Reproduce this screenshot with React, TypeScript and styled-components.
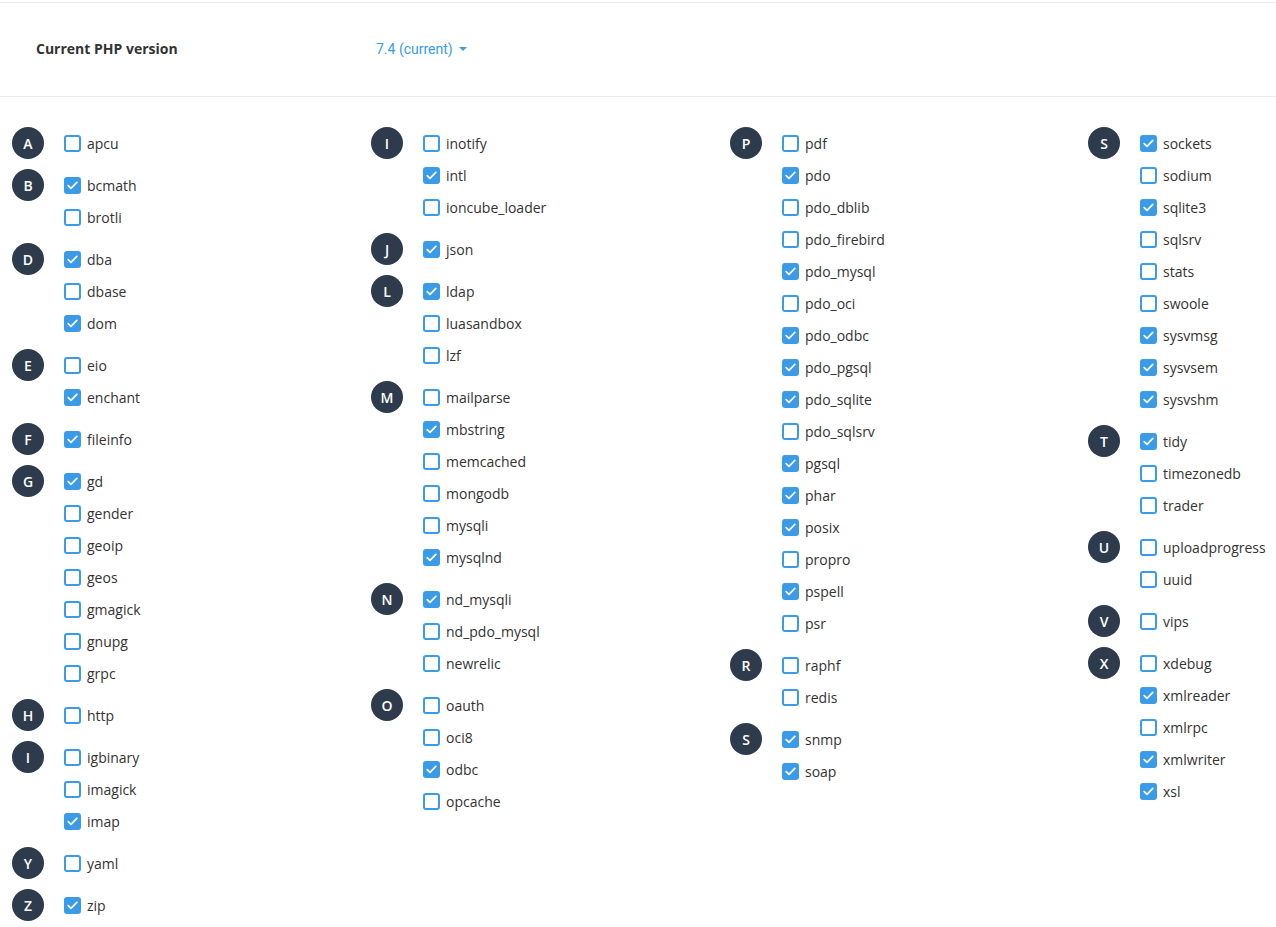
import * as React from 'react';
import styled, { createGlobalStyle } from 'styled-components';

const GlobalStyle = createGlobalStyle`
  html, body {
    margin: 0;
    padding: 0;
    background: #ffffff;
    overflow-x: hidden;
  }
  body {
    font-family: "Open Sans", "Liberation Sans", sans-serif;
    font-size: 14px;
    color: #333333;
  }
`;

interface Ext {
  name: string;
  on?: boolean;
}

interface Group {
  letter: string;
  items: Ext[];
}

const e = (name: string, on = false): Ext => ({ name, on });

const columns: Group[][] = [
  [
    { letter: 'A', items: [e('apcu')] },
    { letter: 'B', items: [e('bcmath', true), e('brotli')] },
    { letter: 'D', items: [e('dba', true), e('dbase'), e('dom', true)] },
    { letter: 'E', items: [e('eio'), e('enchant', true)] },
    { letter: 'F', items: [e('fileinfo', true)] },
    {
      letter: 'G',
      items: [e('gd', true), e('gender'), e('geoip'), e('geos'), e('gmagick'), e('gnupg'), e('grpc')],
    },
    { letter: 'H', items: [e('http')] },
    { letter: 'I', items: [e('igbinary'), e('imagick'), e('imap', true)] },
    { letter: 'Y', items: [e('yaml')] },
    { letter: 'Z', items: [e('zip', true)] },
  ],
  [
    { letter: 'I', items: [e('inotify'), e('intl', true), e('ioncube_loader')] },
    { letter: 'J', items: [e('json', true)] },
    { letter: 'L', items: [e('ldap', true), e('luasandbox'), e('lzf')] },
    {
      letter: 'M',
      items: [e('mailparse'), e('mbstring', true), e('memcached'), e('mongodb'), e('mysqli'), e('mysqlnd', true)],
    },
    { letter: 'N', items: [e('nd_mysqli', true), e('nd_pdo_mysql'), e('newrelic')] },
    { letter: 'O', items: [e('oauth'), e('oci8'), e('odbc', true), e('opcache')] },
  ],
  [
    {
      letter: 'P',
      items: [
        e('pdf'),
        e('pdo', true),
        e('pdo_dblib'),
        e('pdo_firebird'),
        e('pdo_mysql', true),
        e('pdo_oci'),
        e('pdo_odbc', true),
        e('pdo_pgsql', true),
        e('pdo_sqlite', true),
        e('pdo_sqlsrv'),
        e('pgsql', true),
        e('phar', true),
        e('posix', true),
        e('propro'),
        e('pspell', true),
        e('psr'),
      ],
    },
    { letter: 'R', items: [e('raphf'), e('redis')] },
    { letter: 'S', items: [e('snmp', true), e('soap', true)] },
  ],
  [
    {
      letter: 'S',
      items: [
        e('sockets', true),
        e('sodium'),
        e('sqlite3', true),
        e('sqlsrv'),
        e('stats'),
        e('swoole'),
        e('sysvmsg', true),
        e('sysvsem', true),
        e('sysvshm', true),
      ],
    },
    { letter: 'T', items: [e('tidy', true), e('timezonedb'), e('trader')] },
    { letter: 'U', items: [e('uploadprogress'), e('uuid')] },
    { letter: 'V', items: [e('vips')] },
    {
      letter: 'X',
      items: [e('xdebug'), e('xmlreader', true), e('xmlrpc'), e('xmlwriter', true), e('xsl', true)],
    },
  ],
];

const Page = styled.div`
  padding-top: 2px;
`;

const VersionBar = styled.div`
  display: flex;
  align-items: center;
  height: 95px;
  box-sizing: border-box;
  padding: 0 0 2px 36px;
  border-top: 1px solid #ebebeb;
  border-bottom: 1px solid #ebebeb;
`;

const VersionLabel = styled.div`
  width: 340px;
  font-weight: 700;
  color: #333333;
`;

const VersionSelect = styled.button`
  display: flex;
  align-items: center;
  gap: 6px;
  padding: 0;
  border: none;
  background: none;
  font-family: Roboto, "Open Sans", sans-serif;
  font-size: 14px;
  color: #3a9be9;
  cursor: pointer;
`;

const Caret = styled.span`
  width: 0;
  height: 0;
  border-left: 4px solid transparent;
  border-right: 4px solid transparent;
  border-top: 4px solid #3a9be9;
`;

const Grid = styled.div`
  display: grid;
  grid-template-columns: 359px 359px 358px 1fr;
  padding: 30px 0 0 12px;
`;

const Column = styled.div`
  display: flex;
  flex-direction: column;
  gap: 10px;
  min-width: 0;
`;

const GroupRow = styled.div`
  display: flex;
  align-items: flex-start;
`;

const LetterBadge = styled.div`
  flex: none;
  display: flex;
  align-items: center;
  justify-content: center;
  width: 32px;
  height: 32px;
  border-radius: 50%;
  background: #2d3b4d;
  color: #ffffff;
  font-size: 14px;
  font-weight: 600;
`;

const ItemList = styled.div`
  display: flex;
  flex-direction: column;
  margin-left: 20px;
`;

const Item = styled.label`
  display: flex;
  align-items: center;
  height: 32px;
  gap: 6px;
  color: #333333;
  white-space: nowrap;
  cursor: pointer;
`;

const Box = styled.span<{ $on?: boolean }>`
  box-sizing: border-box;
  display: flex;
  align-items: center;
  justify-content: center;
  width: 17px;
  height: 17px;
  border-radius: 3px;
  border: 2px solid #3a9be9;
  background: ${(p) => (p.$on ? '#3a9be9' : '#ffffff')};
`;

const Check = () => (
  <svg width="11" height="9" viewBox="0 0 11 9" fill="none">
    <path d="M1.2 4.6 L4 7.3 L9.8 1.4" stroke="#ffffff" strokeWidth="1.7" strokeLinecap="round" strokeLinejoin="round" />
  </svg>
);

export default function App() {
  return (
    <>
      <GlobalStyle />
      <Page>
        <VersionBar>
          <VersionLabel>Current PHP version</VersionLabel>
          <VersionSelect>
            7.4 (current)
            <Caret />
          </VersionSelect>
        </VersionBar>
        <Grid>
          {columns.map((col, ci) => (
            <Column key={ci}>
              {col.map((g) => (
                <GroupRow key={g.letter + ci}>
                  <LetterBadge>{g.letter}</LetterBadge>
                  <ItemList>
                    {g.items.map((it) => (
                      <Item key={it.name}>
                        <Box $on={it.on}>{it.on && <Check />}</Box>
                        {it.name}
                      </Item>
                    ))}
                  </ItemList>
                </GroupRow>
              ))}
            </Column>
          ))}
        </Grid>
      </Page>
    </>
  );
}
